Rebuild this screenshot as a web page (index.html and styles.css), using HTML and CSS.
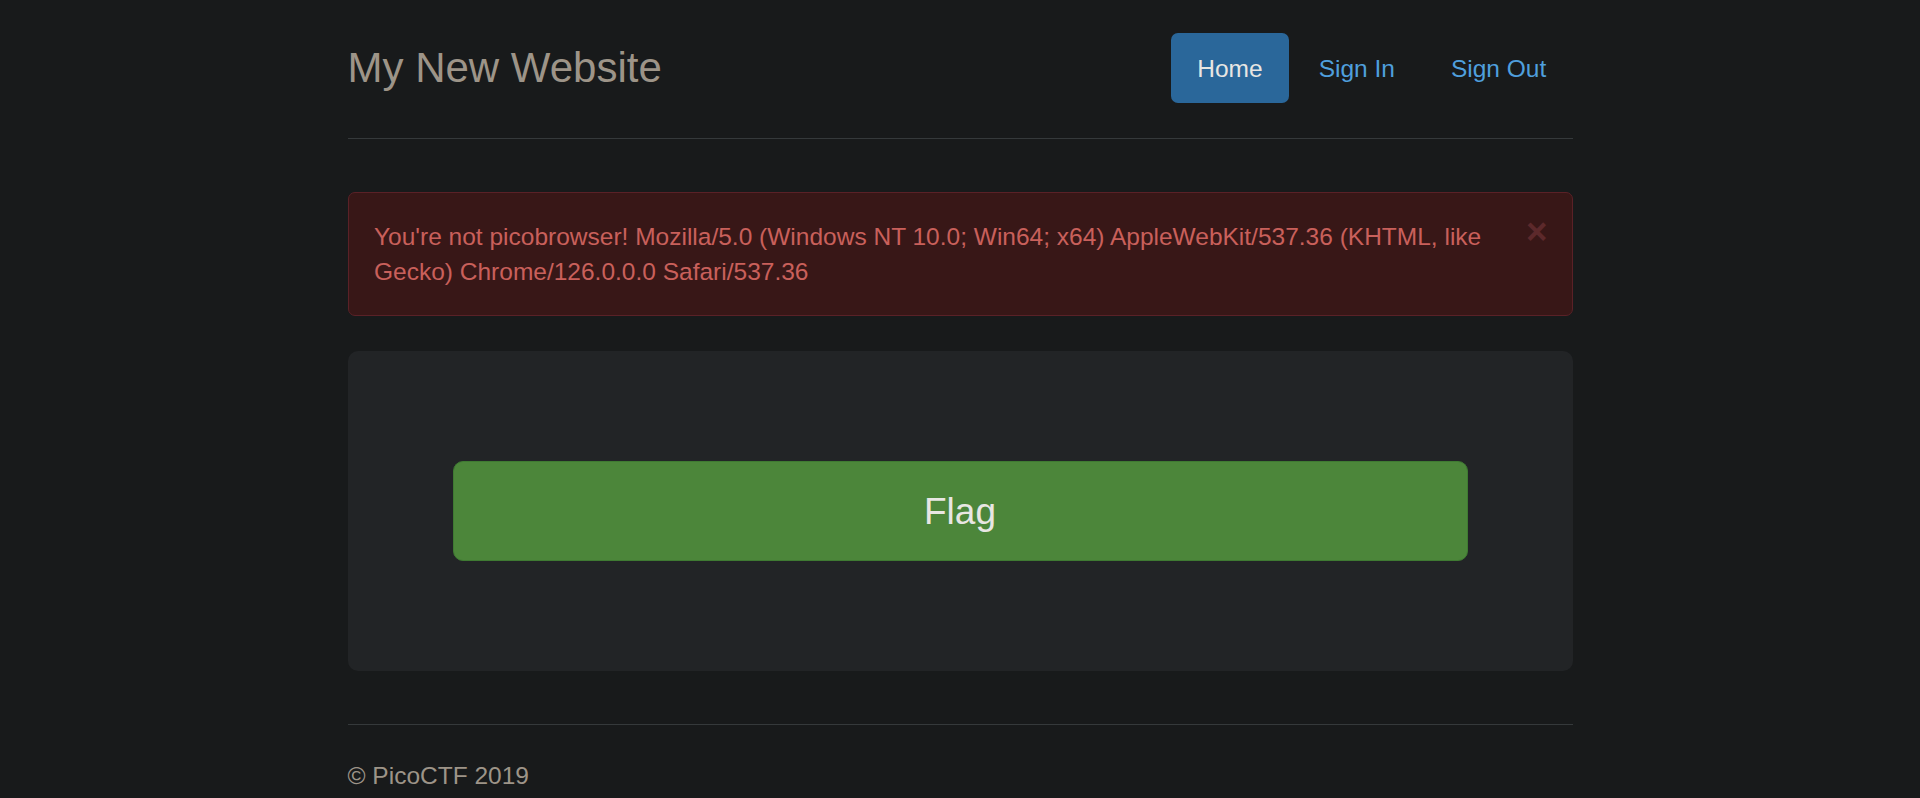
FILE: index.html
```html
<!DOCTYPE html>
<html lang="en">
<head>
<meta charset="utf-8">
<title>My New Website</title>
<link rel="stylesheet" href="styles.css">
</head>
<body>
<div class="container">
  <header class="header">
    <h3 class="brand">My New Website</h3>
    <nav>
      <ul class="nav-pills">
        <li><a class="pill active" href="#">Home</a></li>
        <li><a class="pill" href="#">Sign In</a></li>
        <li><a class="pill" href="#">Sign Out</a></li>
      </ul>
    </nav>
  </header>

  <div class="alert">
    <button class="close" type="button">&times;</button>
    You're not picobrowser! Mozilla/5.0 (Windows NT 10.0; Win64; x64) AppleWebKit/537.36 (KHTML, like Gecko) Chrome/126.0.0.0 Safari/537.36
  </div>

  <div class="jumbotron">
    <a class="btn-flag" href="#">Flag</a>
  </div>

  <footer class="footer">
    <p>&copy; PicoCTF 2019</p>
  </footer>
</div>
</body>
</html>
```
FILE: styles.css
```css
* { box-sizing: border-box; }
html, body { margin: 0; padding: 0; }
body {
  background: #181a1b;
  color: #9d9488;
  font-family: "Liberation Sans", Arial, Helvetica, sans-serif;
  font-size: 24.5px;
  line-height: 35px;
}
.container {
  width: 1225px;
  margin: 0 auto;
}
.header {
  display: flex;
  justify-content: space-between;
  align-items: flex-start;
  padding: 33px 0 35px;
  border-bottom: 1px solid #35393b;
}
.brand {
  margin: 0;
  font-size: 42px;
  line-height: 70px;
  font-weight: 400;
  color: #9d9488;
}
.nav-pills {
  list-style: none;
  margin: 0;
  padding: 0;
  display: flex;
  gap: 3.5px;
}
.pill {
  display: block;
  padding: 17.5px 26.25px;
  border-radius: 7px;
  color: #4f9fdd;
  text-decoration: none;
  line-height: 35px;
}
.pill.active {
  background: #2a679a;
  color: #e8e6e3;
}
.alert {
  position: relative;
  margin-top: 53px;
  margin-bottom: 35px;
  padding: 26px 61px 26px 25.5px;
  background: #381717;
  border: 1px solid #5a2127;
  border-radius: 7px;
  color: #c9605b;
}
.close {
  position: absolute;
  top: 21px;
  right: 24px;
  padding: 0;
  border: 0;
  background: none;
  font-family: "Liberation Sans", Arial, sans-serif;
  font-size: 36.75px;
  font-weight: 700;
  line-height: 35px;
  color: #5c292b;
  cursor: pointer;
}
.jumbotron {
  background: #222426;
  border-radius: 10px;
  padding: 110px 105px;
}
.btn-flag {
  display: flex;
  align-items: center;
  justify-content: center;
  height: 100px;
  background: #4c863a;
  border: 1px solid #3f7a32;
  border-radius: 10px;
  color: #e8e6e3;
  font-size: 37px;
  text-decoration: none;
}
.footer {
  margin-top: 53px;
  padding-top: 33px;
  border-top: 1px solid #35393b;
}
.footer p {
  margin: 0;
}
```
